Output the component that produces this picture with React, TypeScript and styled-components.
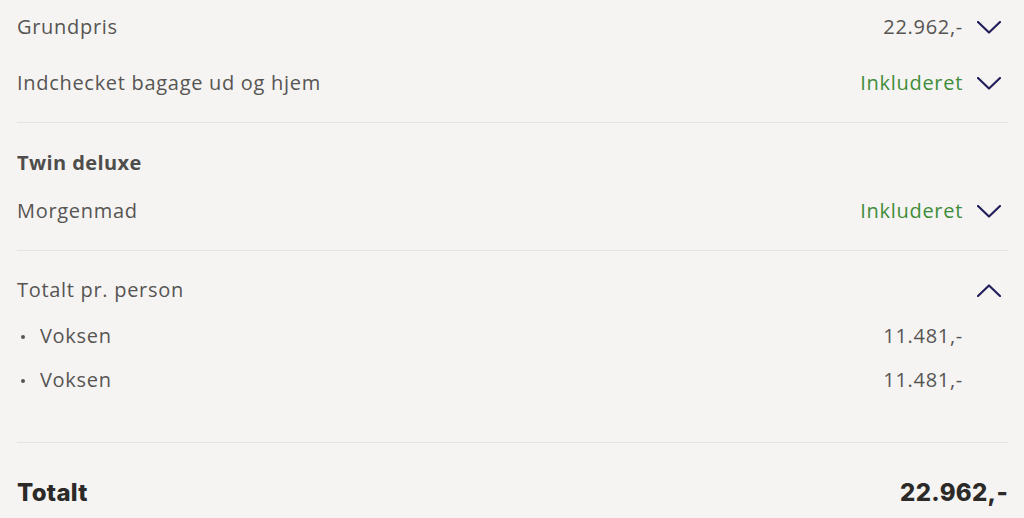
import styled, { createGlobalStyle } from 'styled-components';

const GlobalStyle = createGlobalStyle`
  html, body {
    margin: 0;
    padding: 0;
    background: #f5f4f2;
  }
  body {
    font-family: 'Open Sans', 'Liberation Sans', sans-serif;
    color: #575553;
  }
`;

interface LineINTERFACE {
  label: string;
  value: string;
  included?: boolean;
}

const Chevron = ({ up }: { up?: boolean }) => (
  <svg width="24" height="13" viewBox="0 0 24 13" fill="none">
    <polyline
      points={up ? '1,12 12,1.5 23,12' : '1,1 12,11.5 23,1'}
      stroke="#221f5c"
      strokeWidth="2.2"
      strokeLinecap="round"
      strokeLinejoin="round"
    />
  </svg>
);

function PriceLine({ label, value, included }: LineINTERFACE) {
  return (
    <Row>
      <Label>{label}</Label>
      <Right>
        <Value included={!!included}>{value}</Value>
        <IconBox>
          <Chevron />
        </IconBox>
      </Right>
    </Row>
  );
}

function App() {
  const persons = [
    { label: 'Voksen', value: '11.481,-' },
    { label: 'Voksen', value: '11.481,-' },
  ];

  return (
    <>
      <GlobalStyle />
      <Wrapper>
        <Section>
          <PriceLine label="Grundpris" value="22.962,-" />
          <PriceLine label="Indchecket bagage ud og hjem" value="Inkluderet" included />
        </Section>
        <Section top={28}>
          <Heading>Twin deluxe</Heading>
          <PriceLine label="Morgenmad" value="Inkluderet" included />
        </Section>
        <Section top={16} bottom={39}>
          <HeadRow>
            <Label>Totalt pr. person</Label>
            <IconBox>
              <Chevron up />
            </IconBox>
          </HeadRow>
          <List>
            {persons.map((p, i) => (
              <ListItem key={i}>
                <Bullet />
                <Label>{p.label}</Label>
                <ListValue>{p.value}</ListValue>
              </ListItem>
            ))}
          </List>
        </Section>
        <TotalRow>
          <span>Totalt</span>
          <span>22.962,-</span>
        </TotalRow>
      </Wrapper>
    </>
  );
}
export default App;

const Wrapper = styled.div`
  padding: 0 16px 0 17px;
  display: flex;
  flex-direction: column;
`;

const Section = styled.div<{ top?: number; bottom?: number }>`
  padding-top: ${({ top }) => top || 0}px;
  padding-bottom: ${({ bottom }) => bottom || 10}px;
  border-bottom: 1px solid #e6e4e1;
`;

const Row = styled.div`
  height: 56px;
  display: flex;
  align-items: center;
  justify-content: space-between;
  padding-bottom: 3px;
  box-sizing: border-box;
`;

const Label = styled.span`
  font-size: 20px;
  line-height: 24px;
  letter-spacing: 0.7px;
  color: #575553;
`;

const Right = styled.div`
  display: flex;
  align-items: center;
`;

const Value = styled.span<{ included: boolean }>`
  font-size: 20px;
  line-height: 24px;
  letter-spacing: 0.7px;
  color: ${({ included }) => (included ? '#3f8d3a' : '#575553')};
`;

const IconBox = styled.div`
  width: 45px;
  display: flex;
  justify-content: flex-end;
  padding-right: 7px;
  padding-top: 2px;
  box-sizing: border-box;
`;

const Heading = styled.div`
  font-size: 20px;
  line-height: 24px;
  letter-spacing: 0.4px;
  font-weight: 700;
  color: #4f4d4b;
  margin-bottom: 9px;
`;

const HeadRow = styled.div`
  height: 48px;
  display: flex;
  align-items: center;
  justify-content: space-between;
  padding-bottom: 3px;
  box-sizing: border-box;
`;

const List = styled.ul`
  list-style: none;
  margin: 0;
  padding: 0;
`;

const ListItem = styled.li`
  height: 44px;
  display: flex;
  align-items: center;
  padding-right: 45px;
  padding-bottom: 3px;
  box-sizing: border-box;
`;

const Bullet = styled.span`
  width: 4px;
  height: 4px;
  margin: 3px 15px 0 4px;
  border-radius: 50%;
  background: #575553;
`;

const ListValue = styled.span`
  margin-left: auto;
  font-size: 20px;
  line-height: 24px;
  letter-spacing: 0.7px;
  color: #575553;
`;

const TotalRow = styled.div`
  padding-top: 34px;
  height: 30px;
  display: flex;
  align-items: center;
  justify-content: space-between;
  font-family: 'Inter', 'Liberation Sans', sans-serif;
  font-size: 24px;
  font-weight: 800;
  letter-spacing: 0.3px;
  color: #2b2a29;
`;
